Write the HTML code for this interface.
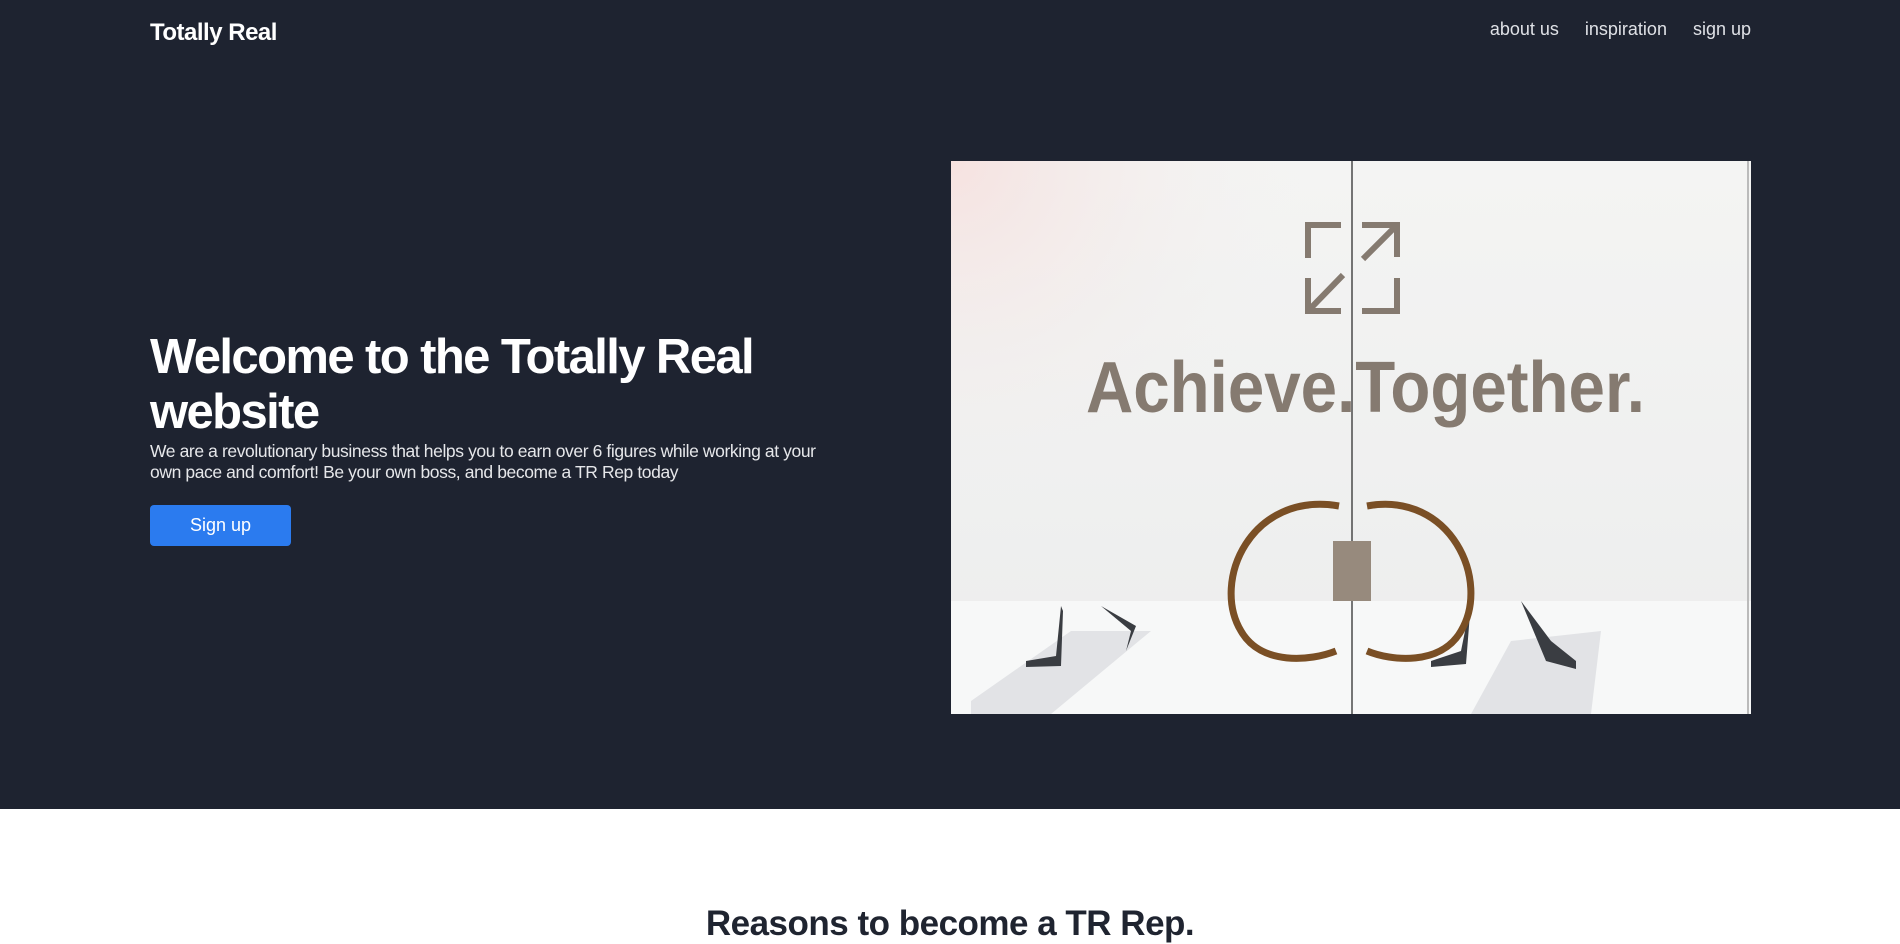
<!DOCTYPE html>
<html><head><meta charset="utf-8"><style>
*{margin:0;padding:0;box-sizing:border-box}
body{width:1900px;height:941px;overflow:hidden;background:#fff;font-family:"Liberation Sans",Arial,sans-serif;position:relative}
.hero{position:absolute;left:0;top:0;width:1900px;height:809px;background:#1e2330}
.logo{position:absolute;left:150px;top:19px;color:#fff;font-weight:bold;font-size:24px;letter-spacing:-0.5px}
.nav{position:absolute;right:149px;top:19px;color:#dfe1e6;font-size:18px;font-weight:300}
.nav span{margin-left:26px}
h1{position:absolute;left:150px;top:330px;color:#fff;font-size:49px;line-height:55px;font-weight:bold;letter-spacing:-1.6px;width:720px}
p.lead{position:absolute;left:150px;top:441px;color:#e6e7ea;font-size:17.5px;line-height:21px;width:700px;letter-spacing:-0.4px}
.btn{position:absolute;left:150px;top:505px;width:141px;height:41px;background:#2b7bef;border-radius:4px;color:#fff;font-size:18px;text-align:center;line-height:41px}
h2{position:absolute;left:0;width:1900px;top:904px;text-align:center;font-size:35px;font-weight:bold;color:#1f2430;letter-spacing:-0.5px}
</style></head><body>
<div class="hero">
<div class="logo">Totally Real</div>
<div class="nav"><span>about us</span><span>inspiration</span><span>sign up</span></div>
<h1>Welcome to the Totally Real website</h1>
<p class="lead">We are a revolutionary business that helps you to earn over 6 figures while working at your own pace and comfort! Be your own boss, and become a TR Rep today</p>
<div class="btn">Sign up</div>
<svg style="position:absolute;left:951px;top:161px" width="800" height="553" viewBox="0 0 800 553">
<defs>
<radialGradient id="g1" cx="0" cy="0" r="1" gradientUnits="userSpaceOnUse" gradientTransform="translate(0 0) scale(350)">
<stop offset="0" stop-color="#f6e2e0"/><stop offset="1" stop-color="#f1f1f0" stop-opacity="0"/></radialGradient>
<linearGradient id="g0" x1="0" y1="0" x2="0" y2="1"><stop offset="0" stop-color="#f4f4f3"/><stop offset="1" stop-color="#eceded"/></linearGradient>
</defs>
<rect width="800" height="553" fill="url(#g0)"/>
<rect width="800" height="553" fill="url(#g1)"/>
<rect y="440" width="800" height="113" fill="#f7f8f8"/>
<path d="M20 540 L120 470 L200 470 L100 553 L20 553Z M520 553 L560 480 L650 470 L640 553Z" fill="#d3d6da" opacity="0.6"/>
<path d="M110 445 L105 495 L75 500 L75 506 L110 505 L112 450Z M150 445 L180 470 L175 490 L185 465Z M520 440 L510 490 L480 500 L480 506 L515 503Z M570 440 L600 480 L625 500 L625 508 L595 500Z" fill="#3a3d42"/>
<line x1="401" y1="0" x2="401" y2="553" stroke="#4a4a4a" stroke-width="1.5"/>
<line x1="797" y1="0" x2="797" y2="553" stroke="#bbb" stroke-width="2"/>
<g fill="none" stroke="#857a70" stroke-width="6">
<path d="M357 97 V64 H390"/><path d="M411 64 H446 V96 M446 64 L412 98"/>
<path d="M357 117 V150 H390 M357 150 L392 114"/><path d="M411 150 H446 V117"/>
</g>
<text x="135" y="251" textLength="559" lengthAdjust="spacingAndGlyphs" font-family="Liberation Sans,sans-serif" font-weight="bold" font-size="72" fill="#857a70">Achieve.Together.</text>
<g fill="none" stroke="#7a4f25" stroke-width="7">
<path d="M388 345 C300 330 260 420 290 470 C310 505 360 500 385 490"/>
<path d="M416 345 C500 330 540 420 510 470 C490 505 440 500 416 490"/>
</g>
<rect x="382" y="380" width="38" height="60" fill="#978a7d"/>
</svg>
</div>
<h2>Reasons to become a TR Rep.</h2>
</body></html>
